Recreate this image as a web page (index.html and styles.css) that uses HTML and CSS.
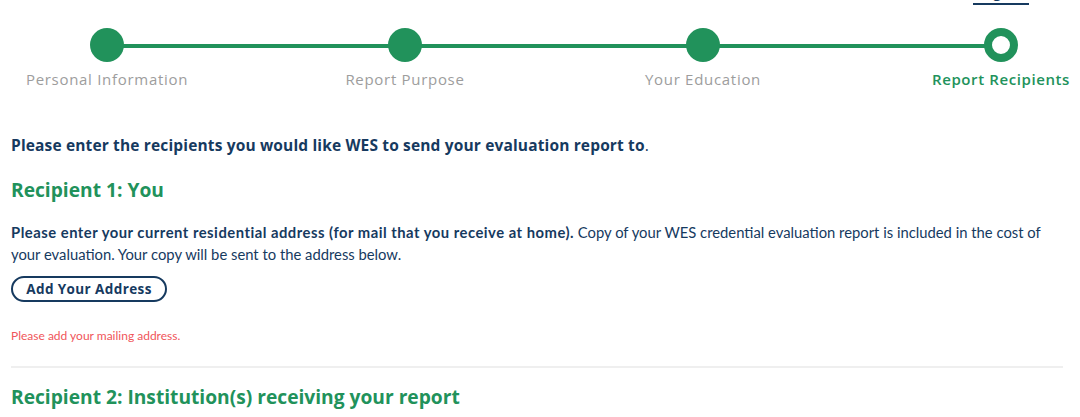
FILE: index.html
```html
<!DOCTYPE html>
<html lang="en">
<head>
<meta charset="utf-8">
<title>Report Recipients</title>
<link rel="stylesheet" href="styles.css">
</head>
<body>
<div class="topbar"><a class="toplink" href="#">Logout</a></div>
<div class="stepper">
  <div class="step done"><span class="dot"></span><span class="label">Personal Information</span></div>
  <div class="step done"><span class="dot"></span><span class="label">Report Purpose</span></div>
  <div class="step done"><span class="dot"></span><span class="label">Your Education</span></div>
  <div class="step current"><span class="dot"></span><span class="label">Report Recipients</span></div>
</div>
<main class="content">
  <p class="intro"><strong>Please enter the recipients you would like WES to send your evaluation report to</strong>.</p>
  <h2 class="rhead first">Recipient 1: You</h2>
  <p class="para"><strong>Please enter your current residential address (for mail that you receive at home).</strong> Copy of your WES credential evaluation report is included in the cost of your evaluation. Your copy will be sent to the address below.</p>
  <button class="btn" type="button">Add Your Address</button>
  <p class="error">Please add your mailing address.</p>
  <hr class="sep">
  <h2 class="rhead">Recipient 2: Institution(s) receiving your report</h2>
</main>
</body>
</html>
```
FILE: styles.css
```css
* { box-sizing: border-box; }
html, body { margin: 0; padding: 0; background: #fff; }
body { font-family: "Open Sans", "Liberation Sans", sans-serif; color: #163a5f; overflow: hidden; }

.topbar { display: flex; justify-content: flex-end; padding-right: 51px; height: 5px; }
.toplink {
  display: block; margin-top: -17px; line-height: 20px; height: 22px;
  font-size: 14px; font-weight: 700; color: #163a5f; text-decoration: none;
  border-bottom: 2px solid #163a5f; width: 56px; text-align: center;
}

.stepper {
  display: flex; justify-content: space-between;
  margin: 23px 62px 0 90px;
  background: linear-gradient(#21925b, #21925b) no-repeat;
  background-size: calc(100% - 34px) 4px;
  background-position: 17px 16px;
}
.step { width: 34px; display: flex; flex-direction: column; align-items: center; }
.dot { display: block; width: 34px; height: 34px; border-radius: 50%; background: #21925b; }
.current .dot { background: #fff; border: 8px solid #21925b; }
.label {
  margin-top: 7px; white-space: nowrap; line-height: 20px;
  font-size: 15px; letter-spacing: 0.7px; color: #9d9d9d; font-family: "Open Sans", sans-serif;
}
.current .label { color: #21925b; font-weight: 600; letter-spacing: 0.6px; }

.content { padding: 0 17px 0 11px; }
.intro { margin: 45px 0 0; font-size: 15.5px; letter-spacing: 0.15px; line-height: 22px; }
.intro strong { font-weight: 700; }
.rhead { margin: 16px 0 0; font-size: 19.2px; line-height: 26px; font-weight: 700; color: #21925b; }
.rhead.first { margin-top: 21px; }
.para { margin: 18px 0 0; font-family: "Lato", sans-serif; font-size: 14.8px; line-height: 22px; color: #163a5f; }
.para strong { font-weight: 700; letter-spacing: 0.5px; }
.btn {
  display: block; margin-top: 11px; width: 156px; height: 26px; padding: 0;
  border: 2px solid #163a5f; border-radius: 13px; background: #fff;
  font-family: "Open Sans", sans-serif; font-size: 13.5px; letter-spacing: 0.4px; font-weight: 700; color: #163a5f;
}
.error { margin: 26px 0 0; font-family: "Lato", sans-serif; font-size: 12px; line-height: 16px; color: #f0555a; }
.sep { margin: 22px 0 0; border: 0; height: 2px; background: #efefef; }
```
